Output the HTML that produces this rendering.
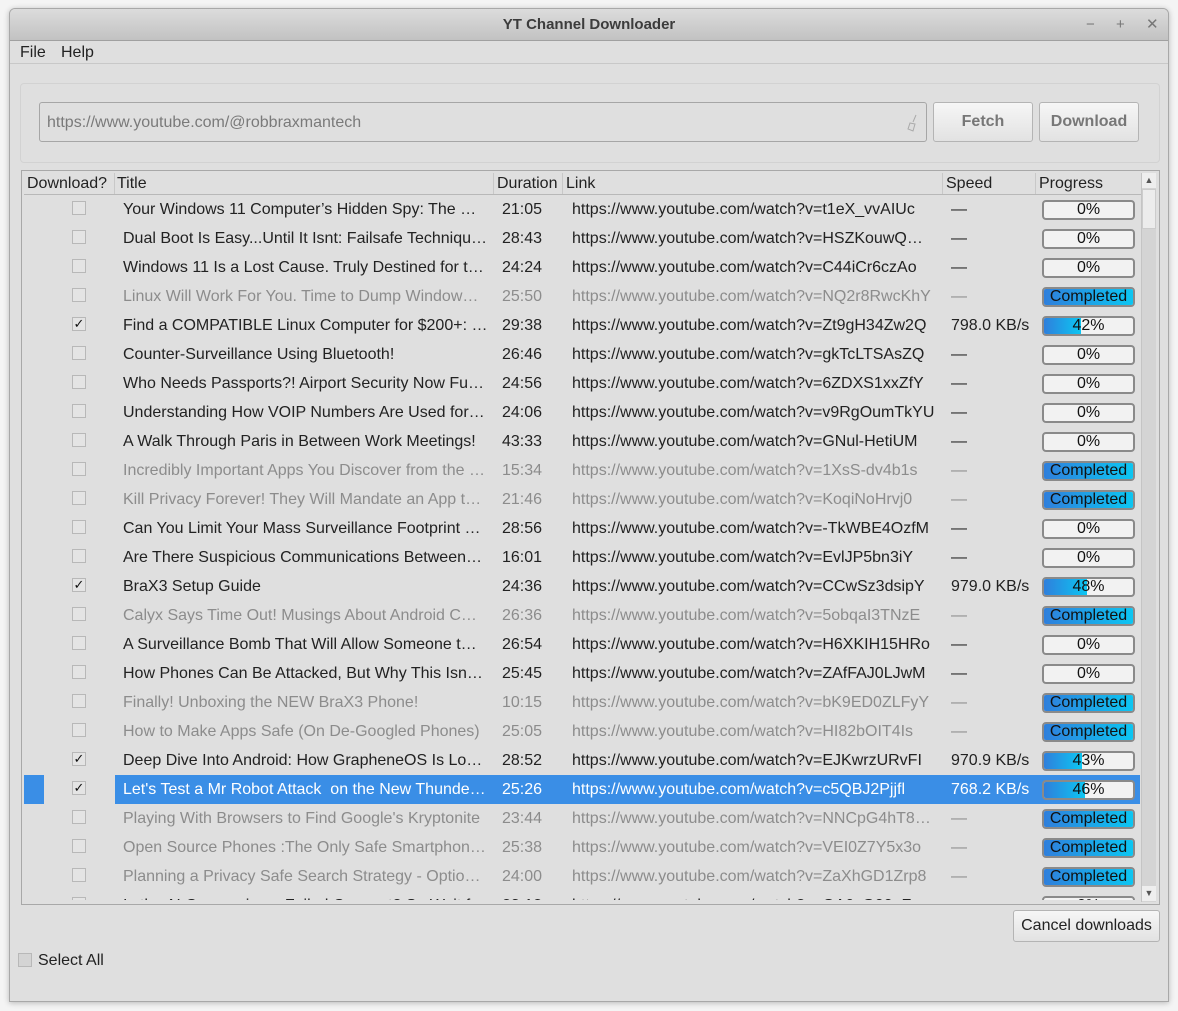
<!DOCTYPE html>
<html><head><meta charset="utf-8"><style>
*{margin:0;padding:0;box-sizing:border-box}
body{width:1178px;height:1011px;background:#f4f4f4;font-family:"Liberation Sans",sans-serif;font-size:16px;color:#222;position:relative;overflow:hidden}
.win{position:absolute;left:9px;top:8px;width:1160px;height:994px;background:#dfdfdf;border:1px solid #a8a8a8;border-radius:6px 6px 0 0;box-shadow:0 1px 6px rgba(0,0,0,.25);overflow:hidden}
.tb{position:absolute;left:0;top:0;width:100%;height:32px;background:linear-gradient(#dcdcdc,#c2c2c2);border-bottom:1px solid #a0a0a0;text-align:center;font-weight:bold;font-size:15px;line-height:32px;color:#3c3c3c}
.ctl{position:absolute;top:0;font-weight:normal;color:#777;font-size:15px}
.menu{position:absolute;left:0;top:32px;width:100%;height:23px;border-bottom:1px solid #c8c8c8;line-height:24px}
.abs{position:absolute}
.panel{left:10px;top:74px;width:1140px;height:80px;border:1px solid #d2d2d2;border-radius:4px}
.inp{left:29px;top:93px;width:888px;height:40px;border:1px solid #a6a6a6;border-radius:3px;color:#7a7a7a;line-height:40px;padding-left:7px}
.btn{border:1px solid #b4b4b4;border-radius:3px;background:linear-gradient(#f6f6f6,#e2e2e2);text-align:center;font-weight:bold;color:#777}
.tbl{left:11px;top:161px;width:1139px;height:735px;border:1px solid #a8a8a8}
.hdr{position:absolute;top:164px;height:21px;line-height:22px;border-right:1px solid #c8c8c8;padding-left:3px}
.hl{position:absolute;left:14px;top:185px;width:1117px;height:1px;background:#b8b8b8}
.r{position:absolute;left:0;width:1160px;height:29px;line-height:29px;white-space:nowrap}
.r>*{position:absolute}
.cb{left:62px;top:6px;width:14px;height:14px;border:1px solid #b8b8b8;background:#e4e4e4;font-style:normal;font-size:13px;line-height:12px;text-align:center;color:#111}
.t{left:113px}.d{left:492px}.l{left:562px}.s{left:941px}
.p{left:1032px;top:5px;width:93px;height:20px;border:2px solid #8a8a8a;border-radius:4px;background:#f2f2f2;overflow:hidden;font-weight:normal;color:#111}
.p em{position:absolute;left:0;top:0;bottom:0;background:linear-gradient(90deg,#2f7fdc,#0cc6f2)}
.p span{position:absolute;left:0;right:0;top:0;text-align:center;line-height:16px;font-size:16px}
.g{color:#8c8c8c}
.g .p span{color:#111}
.sel{color:#fff}
.selbg{position:absolute;left:105px;width:1025px;height:29px;background:#3a8ee6}
.clip{position:absolute;left:11px;top:186px;width:1120px;height:705px;overflow:hidden}
.clip .r{left:-11px}
</style></head><body>
<div class="win">
<div class="tb">YT Channel Downloader<span class="ctl" style="left:1076px">−</span><span class="ctl" style="left:1106px">+</span><span class="ctl" style="left:1136px">✕</span></div>
<div class="menu"><span class="abs" style="left:10px">File</span><span class="abs" style="left:51px">Help</span></div>
<div class="abs panel"></div>
<div class="abs inp">https://www.youtube.com/@robbraxmantech<svg class="abs" style="left:866px;top:11px" width="14" height="18" viewBox="0 0 14 18"><path d="M10 1l-3 7M4 9l5 1-2 7-5-2z" stroke="#aaa" fill="#ddd"/></svg></div>
<div class="abs btn" style="left:923px;top:93px;width:100px;height:40px;line-height:38px">Fetch</div>
<div class="abs btn" style="left:1029px;top:93px;width:100px;height:40px;line-height:38px">Download</div>
<div class="abs tbl"></div>
<div class="hdr" style="left:14px;width:91px">Download?</div>
<div class="hdr" style="left:104px;width:380px">Title</div>
<div class="hdr" style="left:484px;width:69px">Duration</div>
<div class="hdr" style="left:553px;width:380px">Link</div>
<div class="hdr" style="left:933px;width:93px">Speed</div>
<div class="hdr" style="left:1026px;width:105px;border:none">Progress</div>
<div class="hl"></div>
<div class="abs" style="left:1131px;top:164px;width:15px;height:729px;background:#d4d4d4;border-left:1px solid #c4c4c4"></div>
<div class="abs" style="left:1132px;top:164px;width:14px;height:15px;background:#eee;font-size:9px;text-align:center;color:#555;line-height:15px">▲</div>
<div class="abs" style="left:1132px;top:180px;width:14px;height:40px;background:#ececec;border:1px solid #ccc"></div>
<div class="abs" style="left:1132px;top:877px;width:14px;height:15px;background:#eee;font-size:9px;text-align:center;color:#555;line-height:15px">▼</div>
<div class="clip">
<div class="r" style="top:0"><i class="cb"></i><span class="t">Your Windows 11 Computer’s Hidden Spy: The …</span><span class="d">21:05</span><span class="l">https://www.youtube.com/watch?v=t1eX_vvAIUc</span><span class="s">—</span><b class="p"><span>0%</span></b></div>
<div class="r" style="top:29px"><i class="cb"></i><span class="t">Dual Boot Is Easy...Until It Isnt: Failsafe Techniqu…</span><span class="d">28:43</span><span class="l">https://www.youtube.com/watch?v=HSZKouwQ…</span><span class="s">—</span><b class="p"><span>0%</span></b></div>
<div class="r" style="top:58px"><i class="cb"></i><span class="t">Windows 11 Is a Lost Cause. Truly Destined for t…</span><span class="d">24:24</span><span class="l">https://www.youtube.com/watch?v=C44iCr6czAo</span><span class="s">—</span><b class="p"><span>0%</span></b></div>
<div class="r g" style="top:87px"><i class="cb"></i><span class="t">Linux Will Work For You. Time to Dump Window…</span><span class="d">25:50</span><span class="l">https://www.youtube.com/watch?v=NQ2r8RwcKhY</span><span class="s">—</span><b class="p"><em style="width:100%"></em><span>Completed</span></b></div>
<div class="r" style="top:116px"><i class="cb">✓</i><span class="t">Find a COMPATIBLE Linux Computer for $200+: …</span><span class="d">29:38</span><span class="l">https://www.youtube.com/watch?v=Zt9gH34Zw2Q</span><span class="s">798.0 KB/s</span><b class="p"><em style="width:42%"></em><span>42%</span></b></div>
<div class="r" style="top:145px"><i class="cb"></i><span class="t">Counter-Surveillance Using Bluetooth!</span><span class="d">26:46</span><span class="l">https://www.youtube.com/watch?v=gkTcLTSAsZQ</span><span class="s">—</span><b class="p"><span>0%</span></b></div>
<div class="r" style="top:174px"><i class="cb"></i><span class="t">Who Needs Passports?! Airport Security Now Fu…</span><span class="d">24:56</span><span class="l">https://www.youtube.com/watch?v=6ZDXS1xxZfY</span><span class="s">—</span><b class="p"><span>0%</span></b></div>
<div class="r" style="top:203px"><i class="cb"></i><span class="t">Understanding How VOIP Numbers Are Used for…</span><span class="d">24:06</span><span class="l">https://www.youtube.com/watch?v=v9RgOumTkYU</span><span class="s">—</span><b class="p"><span>0%</span></b></div>
<div class="r" style="top:232px"><i class="cb"></i><span class="t">A Walk Through Paris in Between Work Meetings!</span><span class="d">43:33</span><span class="l">https://www.youtube.com/watch?v=GNul-HetiUM</span><span class="s">—</span><b class="p"><span>0%</span></b></div>
<div class="r g" style="top:261px"><i class="cb"></i><span class="t">Incredibly Important Apps You Discover from the …</span><span class="d">15:34</span><span class="l">https://www.youtube.com/watch?v=1XsS-dv4b1s</span><span class="s">—</span><b class="p"><em style="width:100%"></em><span>Completed</span></b></div>
<div class="r g" style="top:290px"><i class="cb"></i><span class="t">Kill Privacy Forever! They Will Mandate an App t…</span><span class="d">21:46</span><span class="l">https://www.youtube.com/watch?v=KoqiNoHrvj0</span><span class="s">—</span><b class="p"><em style="width:100%"></em><span>Completed</span></b></div>
<div class="r" style="top:319px"><i class="cb"></i><span class="t">Can You Limit Your Mass Surveillance Footprint …</span><span class="d">28:56</span><span class="l">https://www.youtube.com/watch?v=-TkWBE4OzfM</span><span class="s">—</span><b class="p"><span>0%</span></b></div>
<div class="r" style="top:348px"><i class="cb"></i><span class="t">Are There Suspicious Communications Between…</span><span class="d">16:01</span><span class="l">https://www.youtube.com/watch?v=EvlJP5bn3iY</span><span class="s">—</span><b class="p"><span>0%</span></b></div>
<div class="r" style="top:377px"><i class="cb">✓</i><span class="t">BraX3 Setup Guide</span><span class="d">24:36</span><span class="l">https://www.youtube.com/watch?v=CCwSz3dsipY</span><span class="s">979.0 KB/s</span><b class="p"><em style="width:48%"></em><span>48%</span></b></div>
<div class="r g" style="top:406px"><i class="cb"></i><span class="t">Calyx Says Time Out! Musings About Android C…</span><span class="d">26:36</span><span class="l">https://www.youtube.com/watch?v=5obqaI3TNzE</span><span class="s">—</span><b class="p"><em style="width:100%"></em><span>Completed</span></b></div>
<div class="r" style="top:435px"><i class="cb"></i><span class="t">A Surveillance Bomb That Will Allow Someone t…</span><span class="d">26:54</span><span class="l">https://www.youtube.com/watch?v=H6XKIH15HRo</span><span class="s">—</span><b class="p"><span>0%</span></b></div>
<div class="r" style="top:464px"><i class="cb"></i><span class="t">How Phones Can Be Attacked, But Why This Isn…</span><span class="d">25:45</span><span class="l">https://www.youtube.com/watch?v=ZAfFAJ0LJwM</span><span class="s">—</span><b class="p"><span>0%</span></b></div>
<div class="r g" style="top:493px"><i class="cb"></i><span class="t">Finally! Unboxing the NEW BraX3 Phone!</span><span class="d">10:15</span><span class="l">https://www.youtube.com/watch?v=bK9ED0ZLFyY</span><span class="s">—</span><b class="p"><em style="width:100%"></em><span>Completed</span></b></div>
<div class="r g" style="top:522px"><i class="cb"></i><span class="t">How to Make Apps Safe (On De-Googled Phones)</span><span class="d">25:05</span><span class="l">https://www.youtube.com/watch?v=HI82bOIT4Is</span><span class="s">—</span><b class="p"><em style="width:100%"></em><span>Completed</span></b></div>
<div class="r" style="top:551px"><i class="cb">✓</i><span class="t">Deep Dive Into Android: How GrapheneOS Is Lo…</span><span class="d">28:52</span><span class="l">https://www.youtube.com/watch?v=EJKwrzURvFI</span><span class="s">970.9 KB/s</span><b class="p"><em style="width:43%"></em><span>43%</span></b></div>
<div class="r sel" style="top:580px"><div style="left:14px;top:0;width:20px;height:29px;background:#3a8ee6"></div><div class="selbg" style="top:0"></div><i class="cb">✓</i><span class="t">Let's Test a Mr Robot Attack&nbsp; on the New Thunde…</span><span class="d">25:26</span><span class="l">https://www.youtube.com/watch?v=c5QBJ2Pjjfl</span><span class="s">768.2 KB/s</span><b class="p"><em style="width:46%"></em><span>46%</span></b></div>
<div class="r g" style="top:609px"><i class="cb"></i><span class="t">Playing With Browsers to Find Google's Kryptonite</span><span class="d">23:44</span><span class="l">https://www.youtube.com/watch?v=NNCpG4hT8…</span><span class="s">—</span><b class="p"><em style="width:100%"></em><span>Completed</span></b></div>
<div class="r g" style="top:638px"><i class="cb"></i><span class="t">Open Source Phones :The Only Safe Smartphon…</span><span class="d">25:38</span><span class="l">https://www.youtube.com/watch?v=VEI0Z7Y5x3o</span><span class="s">—</span><b class="p"><em style="width:100%"></em><span>Completed</span></b></div>
<div class="r g" style="top:667px"><i class="cb"></i><span class="t">Planning a Privacy Safe Search Strategy - Optio…</span><span class="d">24:00</span><span class="l">https://www.youtube.com/watch?v=ZaXhGD1Zrp8</span><span class="s">—</span><b class="p"><em style="width:100%"></em><span>Completed</span></b></div>
<div class="r" style="top:696px"><i class="cb"></i><span class="t">Is the AI Companion a Failed Concept? So Wait fo…</span><span class="d">23:12</span><span class="l">https://www.youtube.com/watch?v=QA9vG00aFa</span><span class="s">—</span><b class="p"><span>0%</span></b></div>
</div>
<div class="abs btn" style="left:1003px;top:901px;width:147px;height:32px;line-height:30px;font-weight:normal;color:#222">Cancel downloads</div>
<div class="abs" style="left:8px;top:944px;width:14px;height:14px;border:1px solid #b8b8b8;background:#d4d4d4"></div>
<div class="abs" style="left:28px;top:943px">Select All</div>
</div>
</body></html>
